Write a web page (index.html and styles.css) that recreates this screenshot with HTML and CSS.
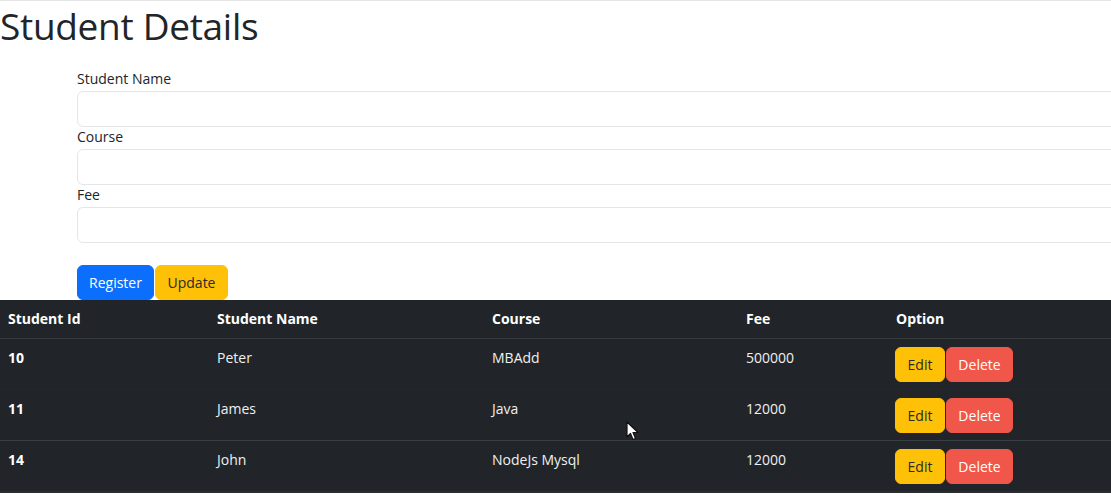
FILE: index.html
```html
<!DOCTYPE html>
<html>
<head>
<meta charset="utf-8">
<title>Student Details</title>
<link rel="stylesheet" href="styles.css">
</head>
<body>
<div class="page">
  <h1 class="title">Student Details</h1>
  <form class="form">
    <div class="field">
      <label class="label">Student Name</label>
      <input class="input" type="text">
    </div>
    <div class="field">
      <label class="label">Course</label>
      <input class="input" type="text">
    </div>
    <div class="field">
      <label class="label">Fee</label>
      <input class="input" type="text">
    </div>
    <div class="actions">
      <button type="button" class="btn btn-primary">Register</button>
      <button type="button" class="btn btn-warning">Update</button>
    </div>
  </form>
  <table class="table">
    <thead>
      <tr>
        <th class="c-id">Student Id</th>
        <th class="c-name">Student Name</th>
        <th class="c-course">Course</th>
        <th class="c-fee">Fee</th>
        <th class="c-opt">Option</th>
      </tr>
    </thead>
    <tbody>
      <tr>
        <th>10</th>
        <td>Peter</td>
        <td>MBAdd</td>
        <td>500000</td>
        <td><div class="ops"><button type="button" class="btn btn-warning">Edit</button><button type="button" class="btn btn-danger">Delete</button></div></td>
      </tr>
      <tr class="faint">
        <th>11</th>
        <td>James</td>
        <td>Java</td>
        <td>12000</td>
        <td><div class="ops"><button type="button" class="btn btn-warning">Edit</button><button type="button" class="btn btn-danger">Delete</button></div></td>
      </tr>
      <tr>
        <th>14</th>
        <td>John</td>
        <td>NodeJs Mysql</td>
        <td>12000</td>
        <td><div class="ops"><button type="button" class="btn btn-warning">Edit</button><button type="button" class="btn btn-danger">Delete</button></div></td>
      </tr>
    </tbody>
  </table>
  <svg class="cursor" width="14" height="20" viewBox="0 0 14 20"><path d="M1 1 L1 16 L4.5 12.5 L7 18.5 L9.5 17.5 L7 11.5 L12 11.5 Z" fill="#fff" stroke="#111" stroke-width="1.2" stroke-linejoin="round"/></svg>
</div>
</body>
</html>
```

FILE: styles.css
```css
* { box-sizing: border-box; }
html, body { margin: 0; padding: 0; }
body {
  background: #fff;
  color: #212529;
  font-family: "Open Sans", "Noto Sans", "Liberation Sans", sans-serif;
  overflow: hidden;
  width: 1111px;
  height: 498px;
}
.page {
  position: relative;
  border-top: 1px solid #e6e6e6;
  padding-top: 3px;
}
.title {
  margin: 0;
  font-size: 37px;
  font-weight: 500;
  line-height: 44px;
  letter-spacing: -0.3px;
}
.form {
  margin: 21px 0 0 77px;
  width: 1100px;
  display: flex;
  flex-direction: column;
}
.field {
  display: flex;
  flex-direction: column;
}
.label {
  font-size: 14px;
  line-height: 20px;
  margin-bottom: 2px;
}
.input {
  height: 36px;
  border: 1px solid #e4e7ea;
  border-radius: 6px;
  background: #fff;
  margin: 0;
  font: inherit;
}
.actions {
  margin-top: 22px;
  display: flex;
}
.btn {
  font-family: inherit;
  font-size: 14px;
  line-height: 20px;
  height: 35px;
  padding: 0 11px;
  border: 1px solid transparent;
  border-radius: 6px;
  cursor: pointer;
}
.btn-primary { background: #0b6efd; color: #fff; border-color: #0b6efd; }
.btn-warning { background: #ffc107; color: #2a2a2a; border-color: #ffc107; }
.btn-danger { background: #f0564a; color: #fff; border-color: #f0564a; }
.actions .btn-primary { width: 77px; }
.actions .btn-warning { width: 73px; margin-left: 1px; }
.table {
  width: 1111px;
  border-collapse: collapse;
  background: #212529;
  color: #fff;
  font-size: 14px;
  line-height: 22px;
}
.table th, .table td {
  text-align: left;
  vertical-align: top;
  padding: 8px 8px 8px;
  border-bottom: 1px solid #373b3e;
}
.table tbody th, .table tbody td { padding: 8px 8px 7px; }
.table thead th { font-weight: 700; }
.table tbody th { font-weight: 700; }
.table tbody td { font-weight: 400; color: #f0f0f0; }
.table tbody tr.faint th, .table tbody tr.faint td { border-bottom-color: #3a3f44; }
.table tbody tr:first-child th, .table tbody tr:first-child td { border-bottom-color: #24282c; }
.table tbody tr:last-child th, .table tbody tr:last-child td { border-bottom: 2px solid #2a2e32; }
.c-id { width: 209px; }
.c-name { width: 275px; }
.c-course { width: 254px; }
.c-fee { width: 150px; }
.ops { display: flex; margin-left: -1px; }
.ops .btn-warning { width: 50px; padding: 0; }
.ops .btn-danger { width: 67px; padding: 0; margin-left: 1px; }
.cursor {
  position: absolute;
  left: 626px;
  top: 420px;
}
```
